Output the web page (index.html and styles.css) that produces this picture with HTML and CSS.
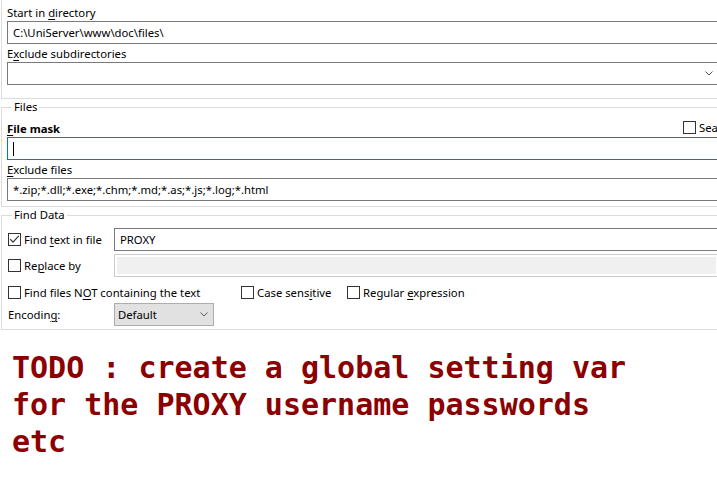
FILE: index.html
```html
<!DOCTYPE html>
<html>
<head>
<meta charset="utf-8">
<link rel="stylesheet" href="styles.css">
</head>
<body>
<div class="page">
  <div class="group g-top">
    <div class="lbl">Start in <u>d</u>irectory</div>
    <div class="field">C:\UniServer\www\doc\files\</div>
    <div class="lbl">E<u>x</u>clude subdirectories</div>
    <div class="field combo"><span class="grow"></span><svg class="chev" width="8" height="5" viewBox="0 0 8 5"><polyline points="0.5,0.5 4,4 7.5,0.5" fill="none" stroke="#5a5a5a" stroke-width="1"/></svg></div>
  </div>

  <div class="group g-files">
    <div class="legend">Files</div>
    <div class="mask-row">
      <div class="lbl bold mask-lbl"><u>F</u>ile mask</div>
      <div class="check top"><span class="cb"></span><span>Search subfolders</span></div>
    </div>
    <div class="field focus"><span class="caret"></span></div>
    <div class="lbl"><u>E</u>xclude files</div>
    <div class="field">*.zip;*.dll;*.exe;*.chm;*.md;*.as;*.js;*.log;*.html</div>
  </div>

  <div class="group g-find">
    <div class="legend">Find Data</div>
    <div class="frow r1">
      <div class="check col1"><span class="cb"><svg width="11" height="11" viewBox="0 0 11 11"><polyline points="1.2,5.2 4,8.2 9.8,1.8" fill="none" stroke="#333" stroke-width="1.2"/></svg></span><span>Find <u>t</u>ext in file</span></div>
      <div class="field grow">PROXY</div>
    </div>
    <div class="frow r2">
      <div class="check col1"><span class="cb"></span><span>Re<u>p</u>lace by</span></div>
      <div class="field disabled grow"><span class="fill"></span></div>
    </div>
    <div class="frow r3">
      <div class="check w1"><span class="cb"></span><span>Find files N<u>O</u>T containing the text</span></div>
      <div class="check w2"><span class="cb"></span><span>Case sens<u>i</u>tive</span></div>
      <div class="check"><span class="cb"></span><span>Regular <u>e</u>xpression</span></div>
    </div>
    <div class="frow r4">
      <div class="col1 enc">Encodin<u>g</u>:</div>
      <div class="field select">Default<span class="grow"></span><svg class="chev" width="8" height="5" viewBox="0 0 8 5"><polyline points="0.5,0.5 4,4 7.5,0.5" fill="none" stroke="#5a5a5a" stroke-width="1"/></svg></div>
    </div>
  </div>

  <div class="todo">TODO : create a global setting var<br>for the PROXY username passwords<br>etc</div>
</div>
</body>
</html>
```

FILE: styles.css
```css
html, body {
  margin: 0;
  padding: 0;
  overflow: hidden;
  background: #fff;
}
body {
  width: 717px;
  height: 492px;
  font-family: "Noto Sans", "Open Sans", sans-serif;
  font-size: 11.3px;
  color: #000;
}
u {
  text-underline-offset: 2px;
  text-decoration-thickness: 1px;
}
.page {
  width: 725px;
}
.group {
  margin-left: 1px;
  border: 1px solid #dcdcdc;
  padding: 0 5px;
}
.g-top {
  border-top: none;
  padding-top: 4px;
  padding-bottom: 13px;
}
.g-files {
  margin-top: 8px;
  padding-bottom: 5px;
}
.g-find {
  margin-top: 8px;
  padding-bottom: 3px;
}
.legend {
  display: table;
  margin: -9px 0 0 5px;
  padding: 0 2px;
  background: #fff;
  line-height: 16px;
}
.lbl {
  line-height: 16px;
  padding-top: 1px;
  white-space: nowrap;
}
.bold {
  font-weight: bold;
}
.field + .lbl {
  margin-top: 1px;
}
.field {
  box-sizing: border-box;
  height: 23px;
  border: 1px solid #7a7a7a;
  padding: 0 5px;
  display: flex;
  align-items: center;
  white-space: nowrap;
  background: #fff;
}
.focus {
  border-color: #0078d7;
}
.grow {
  flex: 1 1 auto;
}
.chev {
  flex: none;
  display: block;
}
.caret {
  display: block;
  width: 1px;
  height: 14px;
  background: #000;
}
.g-files .legend + .mask-row {
  margin-top: 5px;
}
.mask-row {
  display: flex;
  align-items: flex-start;
}
.mask-lbl {
  width: 676px;
  flex: none;
}
.check {
  display: flex;
  align-items: center;
  white-space: nowrap;
  line-height: 16px;
}
.check.top {
  margin-top: 1px;
  align-items: flex-start;
}
.check.top span:last-child {
  line-height: 14px;
}
.cb {
  box-sizing: border-box;
  width: 13px;
  height: 13px;
  border: 1px solid #333;
  background: #fff;
  flex: none;
  margin-right: 3px;
  display: flex;
  align-items: center;
  justify-content: center;
}
.cb svg {
  display: block;
}
.frow {
  display: flex;
  align-items: center;
  padding-left: 1px;
}
.r1 {
  margin-top: 5px;
}
.r2 {
  margin-top: 3px;
}
.r3 {
  margin-top: 7px;
  height: 17px;
}
.r4 {
  margin-top: 2px;
}
.col1 {
  width: 106px;
  flex: none;
}
.w1 {
  width: 233px;
  flex: none;
}
.w2 {
  width: 106px;
  flex: none;
}
.disabled {
  border-color: #cccccc;
  padding: 2px;
}
.fill {
  display: block;
  flex: 1 1 auto;
  height: 17px;
  background: #f0f0f0;
}
.select {
  width: 100px;
  flex: none;
  background: #e1e1e1;
  border-color: #adadad;
  padding: 0 5px 0 3px;
}
.todo {
  margin-top: 19px;
  padding-left: 12px;
  font-family: "DejaVu Sans Mono", "Liberation Mono", monospace;
  font-weight: bold;
  font-size: 30px;
  line-height: 37px;
  color: #8b0000;
  white-space: nowrap;
}
```
